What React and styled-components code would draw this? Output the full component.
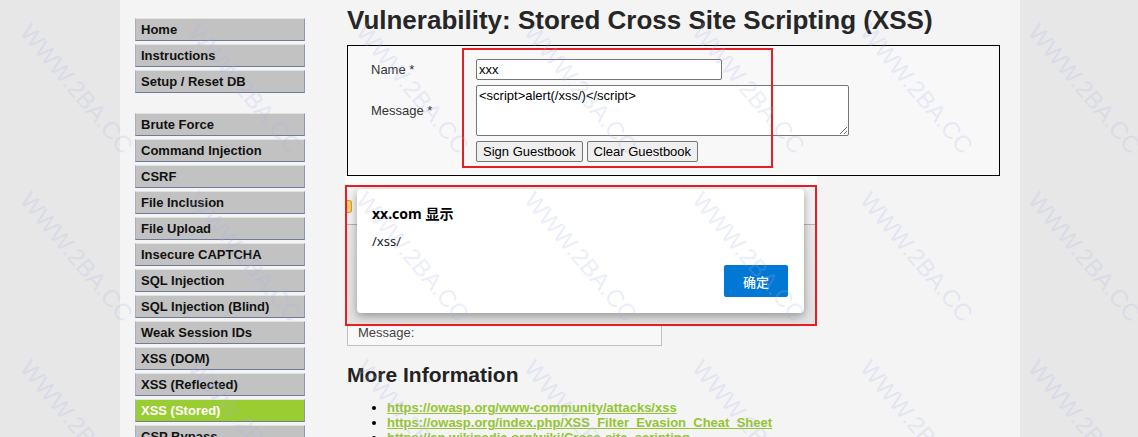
import React from 'react';
import styled, { createGlobalStyle } from 'styled-components';

const Global = createGlobalStyle`
  html, body { margin: 0; padding: 0; background: #e7e7e7; }
  body { font-family: "Liberation Sans", Arial, sans-serif; color: #000; }
`;

const Viewport = styled.div`
  position: relative;
  height: 437px;
  overflow: hidden;
`;

const Container = styled.div`
  width: 900px;
  margin-left: 120px;
  height: 100%;
  box-sizing: border-box;
  padding: 0 20px 0 15px;
  background: #f4f4f4;
  display: flex;
  align-items: flex-start;
`;

const Menu = styled.nav`
  width: 170px;
  flex: none;
  padding-top: 18px;
  display: flex;
  flex-direction: column;
  gap: 20px;
`;

const MenuGroup = styled.ul`
  list-style: none;
  margin: 0;
  padding: 0;
  display: flex;
  flex-direction: column;
  gap: 3px;
`;

const MenuItem = styled.li`
  flex: none;
  box-sizing: border-box;
  height: 23px;
  padding: 3px 5px;
  border: 1px solid;
  border-color: #e2e2e2 #8e98ae #6f7b98 #a9b0c0;
  background: ${p => (p.$active ? '#9acd32' : '#c2c2c2')};
  color: ${p => (p.$active ? '#ffffff' : '#111111')};
  font-size: 13px;
  line-height: 15px;
  font-weight: bold;
  white-space: nowrap;
`;

const Main = styled.main`
  flex: 1;
  margin-left: 42px;
  padding-top: 5px;
  display: block;
  min-width: 0;
`;

const Title = styled.h1`
  margin: 0;
  font-size: 26px;
  line-height: 30px;
  font-weight: bold;
  color: #262626;
  white-space: nowrap;
`;

const FormBox = styled.div`
  position: relative;
  margin-top: 10px;
  border: 1px solid #000;
  background: #f8f8f8;
  padding: 13px 23px;
`;

const FormGrid = styled.div`
  display: grid;
  grid-template-columns: 105px auto;
  row-gap: 5px;
  align-items: center;
`;

const Label = styled.label`
  font-size: 13px;
  color: #333;
`;

const TextInput = styled.input`
  box-sizing: border-box;
  width: 246px;
  height: 21px;
  border: 1px solid #767676;
  border-radius: 2px;
  background: #fff;
  padding: 1px 2px;
  font: 13px "Liberation Sans", Arial, sans-serif;
  color: #000;
  outline: none;
  display: block;
`;

const TextArea = styled.textarea`
  box-sizing: border-box;
  width: 373px;
  height: 51px;
  border: 1px solid #767676;
  border-radius: 2px;
  background: #fff;
  padding: 2px 2px;
  font: 13px/15px "Liberation Sans", Arial, sans-serif;
  color: #000;
  display: block;
  outline: none;
`;

const Buttons = styled.div`
  grid-column: 2;
  display: flex;
  gap: 4px;
`;

const FormButton = styled.button`
  height: 21px;
  padding: 0 6px;
  border: 1px solid #767676;
  border-radius: 2px;
  background: #efefef;
  font: 13px "Liberation Sans", Arial, sans-serif;
  color: #000;
`;

const Highlight = styled.div`
  position: absolute;
  box-sizing: border-box;
  border: 2px solid #e61e25;
  pointer-events: none;
`;

const Comments = styled.div`
  position: relative;
  height: 170px;
  display: flex;
  flex-direction: column;
  justify-content: flex-end;
`;

const CommentBox = styled.div`
  box-sizing: border-box;
  width: 315px;
  border: 1px solid #c0c0c0;
  background: #f8f8f8;
  padding: 5px 10px;
  font-size: 13px;
  line-height: 15px;
  color: #444;
`;

const AlertLayer = styled.div`
  position: absolute;
  top: 0;
  left: -2px;
  width: 472px;
  display: flex;
  flex-direction: column;
`;

const Strip = styled.div`
  height: 9px;
  background: #fcfcfc;
`;

const Frame = styled.div`
  position: relative;
  box-sizing: border-box;
  height: 141px;
  border: 2px solid #e61e25;
  padding: 2px 0 0 10px;
  background: linear-gradient(
    to bottom,
    #f3f3f3 0,
    #f3f3f3 37px,
    #b4b4b4 37px,
    #b4b4b4 38px,
    #e9e9e9 38px,
    #e2e2e2 100%
  );
`;

const Tag = styled.div`
  position: absolute;
  left: 0;
  top: 13px;
  width: 4px;
  height: 11px;
  background: #f3d06a;
  border: 1px solid #d6a22a;
  border-left: none;
  border-radius: 0 3px 3px 0;
`;

const Dialog = styled.div`
  position: relative;
  box-sizing: border-box;
  width: 447px;
  height: 124px;
  background: #fff;
  border-radius: 4px;
  box-shadow: 0 3px 10px rgba(0, 0, 0, 0.35);
  padding: 15px 16px 16px 15px;
  display: flex;
  flex-direction: column;
  font-family: "Noto Sans", "Noto Sans CJK SC", sans-serif;
`;

const DialogTitle = styled.div`
  font-size: 14px;
  line-height: 20px;
  font-weight: bold;
  color: #000;
`;

const DialogMessage = styled.div`
  margin-top: 8px;
  font-size: 13px;
  line-height: 18px;
  color: #222;
`;

const DialogActions = styled.div`
  margin-top: auto;
  display: flex;
  justify-content: flex-end;
`;

const OkButton = styled.button`
  width: 64px;
  height: 32px;
  border: none;
  border-radius: 2px;
  background: #0078d4;
  color: #fff;
  font: 500 13px "Noto Sans CJK SC", sans-serif;
`;

const SubHeading = styled.h2`
  margin: 17px 0 0;
  font-size: 21px;
  line-height: 24px;
  font-weight: bold;
  color: #222;
`;

const Links = styled.ul`
  margin: 13px 0 0;
  padding-left: 40px;
  font-size: 13px;
  line-height: 15px;
  font-weight: bold;
  color: #000;
`;

const Link = styled.a`
  color: #93c530;
  text-decoration: underline;
`;

const Watermarks = styled.div`
  position: absolute;
  inset: 0;
  pointer-events: none;
  display: grid;
  grid-template-columns: repeat(7, 168px);
  grid-auto-rows: 168px;
  padding: 20px 0 0 34px;
  overflow: hidden;
`;

const Watermark = styled.span`
  display: block;
  width: max-content;
  height: 0;
  font: 24px/24px "Liberation Sans", Arial, sans-serif;
  color: rgba(165, 178, 230, 0.22);
  transform-origin: 0 0;
  transform: rotate(50deg);
`;

const menuTop = ['Home', 'Instructions', 'Setup / Reset DB'];
const menuVulns = [
  'Brute Force',
  'Command Injection',
  'CSRF',
  'File Inclusion',
  'File Upload',
  'Insecure CAPTCHA',
  'SQL Injection',
  'SQL Injection (Blind)',
  'Weak Session IDs',
  'XSS (DOM)',
  'XSS (Reflected)',
  'XSS (Stored)',
  'CSP Bypass',
  'JavaScript',
];

const links = [
  'https://owasp.org/www-community/attacks/xss',
  'https://owasp.org/index.php/XSS_Filter_Evasion_Cheat_Sheet',
  'https://en.wikipedia.org/wiki/Cross-site_scripting',
];

export default function App() {
  const marks = Array.from({ length: 21 });
  return (
    <Viewport>
      <Global />
      <Container>
        <Menu>
          <MenuGroup>
            {menuTop.map(m => (
              <MenuItem key={m}>{m}</MenuItem>
            ))}
          </MenuGroup>
          <MenuGroup>
            {menuVulns.map(m => (
              <MenuItem key={m} $active={m === 'XSS (Stored)'}>
                {m}
              </MenuItem>
            ))}
          </MenuGroup>
        </Menu>
        <Main>
          <Title>Vulnerability: Stored Cross Site Scripting (XSS)</Title>
          <FormBox>
            <FormGrid>
              <Label>Name *</Label>
              <div>
                <TextInput defaultValue="xxx" />
              </div>
              <Label>Message *</Label>
              <div>
                <TextArea defaultValue="<script>alert(/xss/)</script>" />
              </div>
              <Buttons>
                <FormButton>Sign Guestbook</FormButton>
                <FormButton>Clear Guestbook</FormButton>
              </Buttons>
            </FormGrid>
            <Highlight style={{ left: 114, top: 2, width: 311, height: 120 }} />
          </FormBox>
          <Comments>
            <CommentBox>
              Name: xxx
              <br />
              Message:
            </CommentBox>
            <AlertLayer>
              <Strip />
              <Frame>
                <Tag />
                <Dialog>
                  <DialogTitle>xx.com 显示</DialogTitle>
                  <DialogMessage>/xss/</DialogMessage>
                  <DialogActions>
                    <OkButton>确定</OkButton>
                  </DialogActions>
                </Dialog>
              </Frame>
            </AlertLayer>
          </Comments>
          <SubHeading>More Information</SubHeading>
          <Links>
            {links.map(l => (
              <li key={l}>
                <Link href="#">{l}</Link>
              </li>
            ))}
          </Links>
        </Main>
      </Container>
      <Watermarks>
        {marks.map((_, i) => (
          <div key={i}>
            <Watermark>WWW.2BA.CC</Watermark>
          </div>
        ))}
      </Watermarks>
    </Viewport>
  );
}
